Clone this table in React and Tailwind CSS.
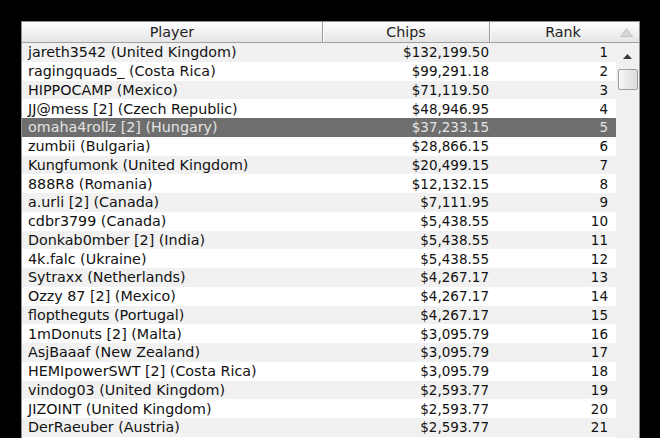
import React from "react";

const rows = [
  ["jareth3542 (United Kingdom)", "$132,199.50", 1],
  ["ragingquads_ (Costa Rica)", "$99,291.18", 2],
  ["HIPPOCAMP (Mexico)", "$71,119.50", 3],
  ["JJ@mess [2] (Czech Republic)", "$48,946.95", 4],
  ["omaha4rollz [2] (Hungary)", "$37,233.15", 5],
  ["zumbii (Bulgaria)", "$28,866.15", 6],
  ["Kungfumonk (United Kingdom)", "$20,499.15", 7],
  ["888R8 (Romania)", "$12,132.15", 8],
  ["a.urli [2] (Canada)", "$7,111.95", 9],
  ["cdbr3799 (Canada)", "$5,438.55", 10],
  ["Donkab0mber [2] (India)", "$5,438.55", 11],
  ["4k.falc (Ukraine)", "$5,438.55", 12],
  ["Sytraxx (Netherlands)", "$4,267.17", 13],
  ["Ozzy 87 [2] (Mexico)", "$4,267.17", 14],
  ["floptheguts (Portugal)", "$4,267.17", 15],
  ["1mDonuts [2] (Malta)", "$3,095.79", 16],
  ["AsjBaaaf (New Zealand)", "$3,095.79", 17],
  ["HEMIpowerSWT [2] (Costa Rica)", "$3,095.79", 18],
  ["vindog03 (United Kingdom)", "$2,593.77", 19],
  ["JIZOINT (United Kingdom)", "$2,593.77", 20],
  ["DerRaeuber (Austria)", "$2,593.77", 21],
];

export default function App() {
  return (
    <div
      className="w-[660px] h-[438px] bg-black overflow-hidden pt-[21px] pl-[21px]"
      style={{ fontFamily: '"DejaVu Sans", sans-serif' }}
    >
      <div className="w-[619px] h-[430px] border border-[#8d8d8d] bg-white flex flex-col text-[14.3px] leading-[17px] text-[#111]">
        {/* header */}
        <div className="flex h-[21px] shrink-0 border-b border-[#a0a0a0] bg-gradient-to-b from-[#ffffff] to-[#e4e4e4] text-[#222]">
          <div className="w-[301px] flex items-center justify-center pt-[1px] border-r border-[#9a9a9a]">Player</div>
          <div className="w-[167px] flex items-center justify-center pt-[1px] border-r border-[#9a9a9a] shadow-[inset_1px_0_0_#ffffff]">Chips</div>
          <div className="flex-1 flex items-center shadow-[inset_1px_0_0_#ffffff]">
            <div className="flex-1 text-center pl-[16px] pt-[1px]">Rank</div>
            <svg width="13" height="9" viewBox="0 0 13 9" className="mr-[6px]">
              <path d="M6.5 0.5 L12.5 8.5 L0.5 8.5 Z" fill="#d6d6d6" stroke="#bcbcbc" strokeWidth="0.8" />
            </svg>
          </div>
        </div>
        {/* body */}
        <div className="flex flex-1 min-h-0">
          <div className="w-[594px] flex flex-col">
            {rows.map(([name, chips, rank], i) => {
              const sel = rank === 5;
              const bg = sel ? "bg-[#6e6e6e] text-[#e4e4e4]" : i % 2 === 0 ? "bg-[#f1f1f1]" : "bg-white";
              return (
                <div key={rank} className={`flex h-[18.75px] shrink-0 items-center pt-[1px] ${bg}`}>
                  <div className="w-[301px] pl-[6px] whitespace-nowrap">{name}</div>
                  <div className="w-[167px] text-right pr-[1px] whitespace-nowrap text-[13.5px]">{chips}</div>
                  <div className="flex-1 text-right pr-[8px] text-[13.5px]">{rank}</div>
                </div>
              );
            })}
          </div>
          <div className="flex-1 bg-[#f0f0f0] flex flex-col items-center pt-[11px]">
            <svg width="9" height="5" viewBox="0 0 9 5">
              <path d="M4.5 0 L9 5 L0 5 Z" fill="#3a3a3a" />
            </svg>
            <div className="mt-[10px] w-[20px] h-[21px] border border-[#9d9d9d] rounded-[2px] bg-gradient-to-r from-[#f6f6f6] to-[#dcdcdc]" />
          </div>
        </div>
      </div>
    </div>
  );
}
